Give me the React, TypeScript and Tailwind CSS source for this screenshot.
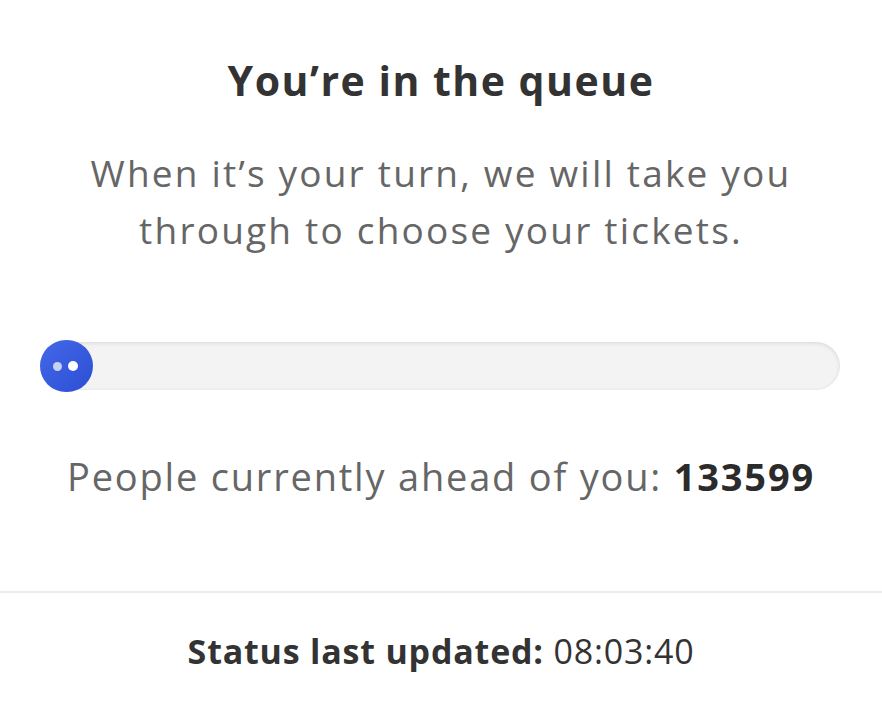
import React from "react";

export default function App() {
  return (
    <div className="w-[882px] h-[717px] bg-white overflow-hidden" style={{ fontFamily: "'Open Sans', 'Noto Sans', sans-serif" }}>
      <div className="flex flex-col items-center pt-[56px]">
        <h1 className="text-[41px] leading-[48px] font-bold text-[#333333] tracking-[1.5px]">You’re in the queue</h1>
        <p className="mt-[40px] text-[37px] leading-[57px] text-[#666666] text-center tracking-[2.2px]">
          When it’s your turn, we will take you
          <br />
          through to choose your tickets.
        </p>
      </div>
      <div className="mt-[84px] px-[40px]">
        <div className="relative h-[48px] rounded-full bg-[#f3f3f3] w-[800px] shadow-[inset_0_1px_4px_rgba(0,0,0,0.12)]">
          <div className="absolute left-0 top-[-2px] w-[53px] h-[52px] rounded-full bg-gradient-to-br from-[#4568e8] to-[#2b4ed4] flex items-center pl-[13px] gap-[6px]">
            <span className="w-[9px] h-[9px] rounded-full bg-[#c8d2f5]" />
            <span className="w-[10px] h-[10px] rounded-full bg-white" />
          </div>
        </div>
      </div>
      <p className="mt-[62px] text-center text-[38px] leading-[48px] text-[#666666] tracking-[1.8px]">
        People currently ahead of you: <span className="font-bold text-[#2b2b2b]">133599</span>
      </p>
      <div className="mt-[91px] h-[2px] bg-[#ececec]" />
      <p className="mt-[36px] text-center text-[34px] leading-[44px] text-[#333333] tracking-[0.8px]">
        <span className="font-bold">Status last updated:</span> 08:03:40
      </p>
    </div>
  );
}
